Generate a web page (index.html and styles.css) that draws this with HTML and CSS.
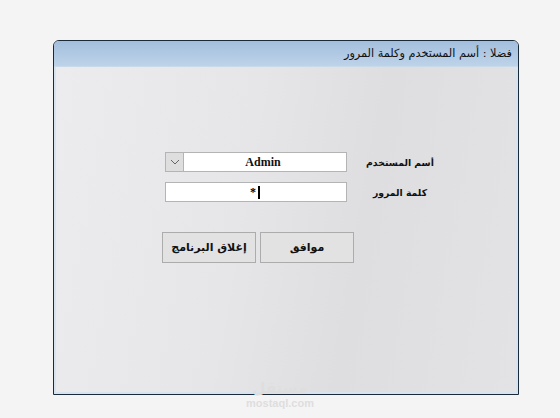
FILE: index.html
```html
<!DOCTYPE html>
<html lang="ar">
<head>
<meta charset="utf-8">
<link rel="stylesheet" href="styles.css">
</head>
<body>
<div class="window">
  <div class="titlebar"><span class="title">فضلا : أسم المستخدم وكلمة المرور</span></div>
  <div class="content">
    <div class="row">
      <div class="combo">
        <span class="drop"><svg width="10" height="6" viewBox="0 0 10 6"><path d="M1 1 L5 5 L9 1" fill="none" stroke="#666" stroke-width="1"/></svg></span>
        <span class="combo-text">Admin</span>
      </div>
      <span class="label">أسم المستخدم</span>
    </div>
    <div class="row row2">
      <div class="field"><span class="star">*</span><span class="caret"></span></div>
      <span class="label">كلمة المرور</span>
    </div>
    <div class="buttons">
      <button class="btn">إغلاق البرنامج</button>
      <button class="btn">موافق</button>
    </div>
  </div>
</div>
<div class="watermark">
  <div class="wm-ar">مستقل</div>
  <div class="wm-en">mostaql.com</div>
</div>
</body>
</html>
```
FILE: styles.css
```css
html, body {
  margin: 0;
  padding: 0;
}
body {
  background: #f4f4f4;
  width: 560px;
  height: 418px;
  overflow: hidden;
  position: relative;
  font-family: "DejaVu Sans", sans-serif;
}
.window {
  margin: 40px 0 0 53px;
  width: 464px;
  height: 353px;
  border: 1px solid #1b2a38;
  border-radius: 6px 6px 0 0;
  display: flex;
  flex-direction: column;
  overflow: hidden;
}
.titlebar {
  height: 25px;
  background: linear-gradient(#a3bedd, #bdd3e9);
  display: flex;
  justify-content: flex-end;
  align-items: center;
  padding-right: 6px;
  border-bottom: 1px solid #c8d9ea;
}
.title {
  direction: rtl;
  font-size: 11.3px;
  color: #111;
}
.content {
  flex: 1;
  border: 2px solid #d7e4ef;
  border-top: none;
  background: linear-gradient(100deg, #ececee, #e6e6e8 40%, #dedee0 65%, #e3e3e5);
  padding: 85px 0 0 109px;
}
.row {
  display: flex;
  align-items: center;
  height: 20px;
}
.row2 {
  margin-top: 10px;
}
.combo, .field {
  width: 180px;
  height: 18px;
  border: 1px solid #b4b4b4;
  background: #fff;
  display: flex;
  align-items: center;
}
.drop {
  width: 17px;
  height: 18px;
  background: #dedede;
  border-right: 1px solid #b4b4b4;
  display: flex;
  align-items: center;
  justify-content: center;
}
.combo-text {
  flex: 1;
  text-align: center;
  font-family: "Liberation Serif", serif;
  font-weight: bold;
  font-size: 12px;
  color: #111;
  padding-right: 4px;
}
.field {
  justify-content: center;
}
.star {
  font-family: "Liberation Serif", serif;
  font-weight: bold;
  font-size: 12px;
  margin-left: -2px;
}
.caret {
  width: 2px;
  height: 13px;
  background: #000;
  margin-left: 2px;
}
.label {
  width: 80px;
  margin-left: 13px;
  text-align: center;
  direction: rtl;
  font-size: 9.3px;
  font-weight: bold;
  color: #111;
}
.buttons {
  display: flex;
  gap: 4px;
  margin: 30px 0 0 -3px;
}
.btn {
  width: 94px;
  height: 31px;
  background: #e2e2e2;
  border: 1px solid #acacac;
  font-family: "DejaVu Sans", sans-serif;
  font-weight: bold;
  font-size: 11px;
  color: #111;
  direction: rtl;
  padding: 0;
}
.watermark {
  position: absolute;
  left: 230px;
  top: 381px;
  width: 100px;
  text-align: center;
  color: #dedede;
  line-height: 1;
}
.wm-ar {
  font-size: 15px;
  font-weight: bold;
}
.wm-en {
  font-family: "Liberation Sans", sans-serif;
  font-size: 11px;
  font-weight: bold;
  margin-top: 2px;
}
```
